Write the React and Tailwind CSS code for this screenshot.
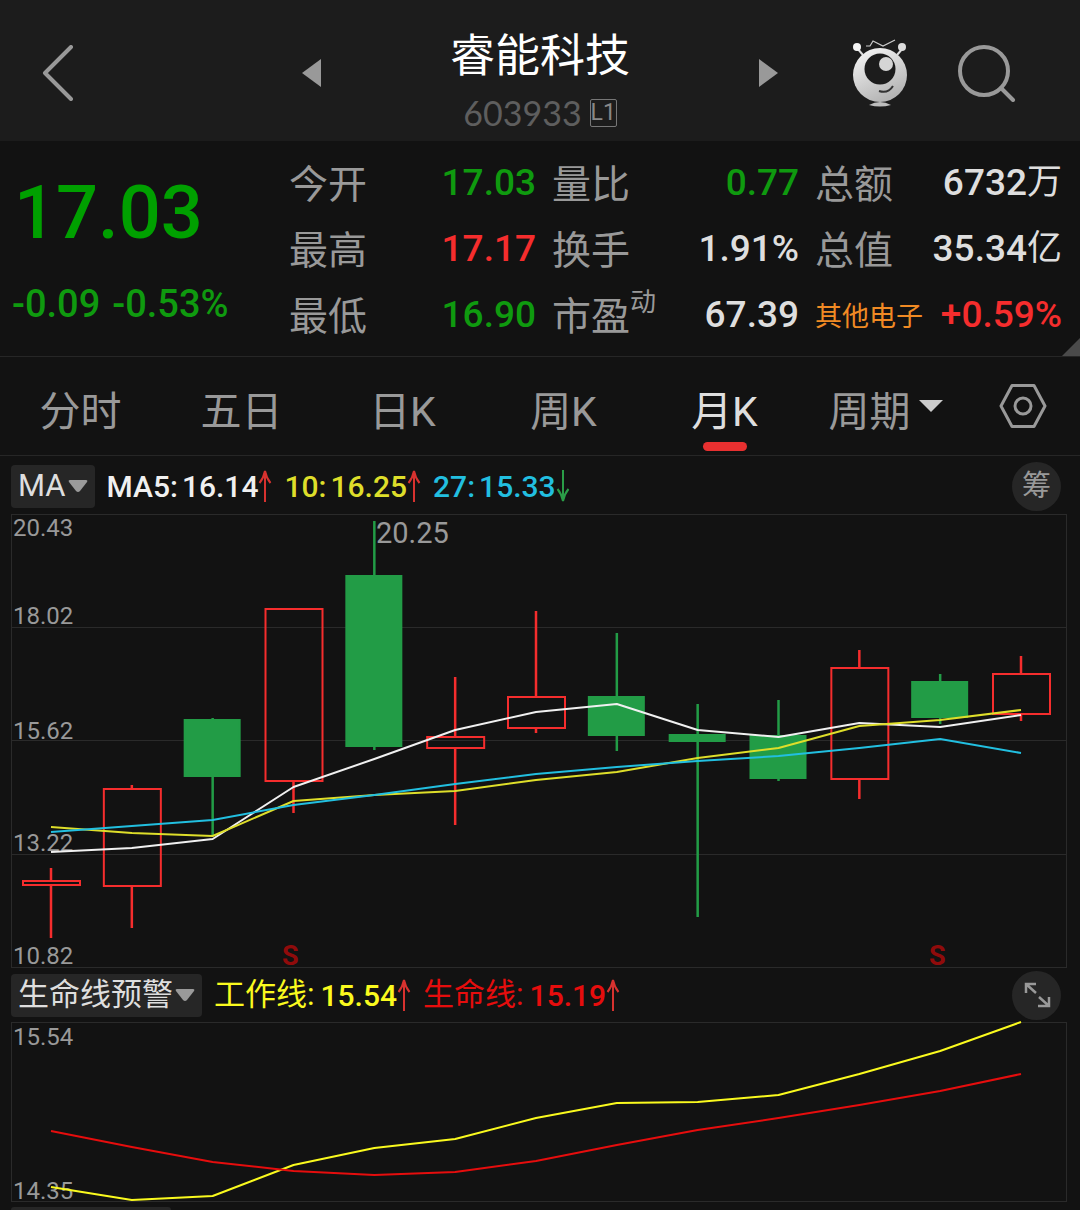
import React, { useState } from 'react';

// 行情数据
const stock = {
  name: '睿能科技',
  code: '603933',
  price: '17.03',
  change: '-0.09',
  percent: '-0.53%',
};

const quotes = [
  [
    { label: '今开', value: '17.03', color: 'text-[#0f9a0f]' },
    { label: '最高', value: '17.17', color: 'text-[#f52d2d]' },
    { label: '最低', value: '16.90', color: 'text-[#0f9a0f]' },
  ],
  [
    { label: '量比', value: '0.77', color: 'text-[#0f9a0f]' },
    { label: '换手', value: '1.91%', color: 'text-[#dedede]' },
    { label: '市盈', sup: '动', value: '67.39', color: 'text-[#dedede]' },
  ],
  [
    { label: '总额', value: '6732', unit: '万', color: 'text-[#dedede]' },
    { label: '总值', value: '35.34', unit: '亿', color: 'text-[#dedede]' },
    { label: '其他电子', industry: true, value: '+0.59%', color: 'text-[#f52d2d]' },
  ],
];

const tabs = ['分时', '五日', '日K', '周K', '月K'];

// K线: 最高, 实体上沿, 实体下沿, 最低, 是否上涨
const candles = [
  [354, 367, 371, 424, true],
  [271, 275, 372, 414, true],
  [204, 206, 262, 322, false],
  [95, 95, 267, 299, true],
  [7, 62, 232, 236, false],
  [163, 223, 234, 311, true],
  [97, 183, 214, 219, true],
  [119, 183, 221, 237, false],
  [190, 221, 227, 403, false],
  [186, 222, 264, 267, false],
  [136, 154, 265, 285, true],
  [160, 168, 203, 210, false],
  [142, 160, 200, 207, true],
];

const ma5 = [338, 334, 325, 273, 245, 216, 198, 190, 216, 223, 209, 213, 201];
const ma10 = [313, 319, 322, 287, 281, 277, 266, 258, 244, 234, 212, 206, 196];
const ma27 = [318, 312, 306, 291, 281, 270, 260, 253, 247, 242, 234, 225, 239];
const workLine = [165, 178, 174, 143, 126, 117, 96, 81, 80, 73, 52, 29, 0];
const lifeLine = [109, 125, 140, 149, 153, 150, 139, 123, 108, 96, 83, 69, 52];

const priceTicks = [
  { text: '20.43', y: 22 },
  { text: '18.02', y: 110 },
  { text: '15.62', y: 225 },
  { text: '13.22', y: 337 },
  { text: '10.82', y: 450 },
];

const xAt = (i) => 40 + (i * 970) / 12;
const toPoints = (list) => list.map((y, i) => `${xAt(i)},${y}`).join(' ');

const Line = ({ data, color }) => (
  <polyline points={toPoints(data)} fill="none" stroke={color} strokeWidth="2" strokeLinejoin="round" />
);

// 涨跌细箭头
const Trend = ({ down }) => (
  <svg viewBox="0 0 14 34" className={down ? 'h-[34px] w-3.5 rotate-180' : 'h-[34px] w-3.5'}>
    <path d="M7 33V3M1.500 14C4 11 6 7 7 2C8 7 10 11 12.500 14" fill="none" stroke={down ? '#2a9d47' : '#d8322f'} strokeWidth="2" />
  </svg>
);

const Caret = () => (
  <svg viewBox="0 0 20 14" className="h-3.5 w-5">
    <path d="M2 1H18Q20 1 19 3L12 12Q10 14 8 12L1 3Q0 1 2 1Z" fill="#9a9a9a" />
  </svg>
);

const Robot = () => (
  <svg viewBox="0 0 56 68" className="h-[68px] w-14">
    <defs>
      <linearGradient id="robotFace" x1="0" y1="0" x2="0.5" y2="1">
        <stop offset="0" stopColor="#fafafa" />
        <stop offset="1" stopColor="#b5b5b5" />
      </linearGradient>
    </defs>
    <path d="M5 9L11 16M51 9L45 16" stroke="#ddd" strokeWidth="2" />
    <circle cx="5" cy="8" r="4" fill="#f5f5f5" />
    <circle cx="50" cy="8" r="4" fill="#dcdcdc" />
    <path d="M14 7H18L21 2L31 7L43 1" fill="none" stroke="#ccc" strokeWidth="1.200" />
    <circle cx="28" cy="36" r="27" fill="url(#robotFace)" />
    <circle cx="28" cy="30" r="15.500" fill="#1c1c1c" />
    <circle cx="34" cy="25" r="7" fill="#d5d5d5" />
    <path d="M27 52Q36 55 41 47" fill="none" stroke="#333" strokeWidth="2" />
    <path d="M17 66Q28 60 39 66Q28 69 17 66Z" fill="#bdbdbd" />
  </svg>
);

const Header = () => (
  <header className="grid h-[141px] grid-cols-[1fr_476px_1fr] items-center bg-[#1c1c1c]">
    <button aria-label="返回" className="justify-self-start pt-1 pl-[42px]">
      <svg viewBox="0 0 32 56" className="h-14 w-8">
        <path d="M29 2L3 28L29 54" fill="none" stroke="#999" strokeWidth="4" strokeLinecap="round" strokeLinejoin="round" />
      </svg>
    </button>
    <div className="flex items-center justify-between pt-1">
      <button aria-label="上一只">
        <svg viewBox="0 0 20 30" className="h-[30px] w-5"><path d="M0 15L19 1V29Z" fill="#999" /></svg>
      </button>
      <div className="flex flex-col items-center pt-5">
        <h1 className="text-[45px] leading-[60px] text-white">{stock.name}</h1>
        <div className="flex items-center gap-2">
          <span className="font-[Lato,sans-serif] text-[34px] leading-[52px] text-[#5e5e5e]">{stock.code}</span>
          <span className="flex h-7 w-[27px] items-center justify-center rounded-xs border border-[#777] text-[23px] leading-none text-[#888]">L1</span>
        </div>
      </div>
      <button aria-label="下一只">
        <svg viewBox="0 0 20 30" className="h-[30px] w-5"><path d="M20 15L1 1V29Z" fill="#999" /></svg>
      </button>
    </div>
    <div className="flex items-center justify-end gap-[50px] pt-1 pr-16">
      <button aria-label="智能助手"><Robot /></button>
      <button aria-label="搜索">
        <svg viewBox="0 0 58 58" className="h-[58px] w-[58px]">
          <circle cx="26" cy="27" r="24" fill="none" stroke="#999" strokeWidth="4" />
          <path d="M43 44L55 56" stroke="#999" strokeWidth="4" strokeLinecap="round" />
        </svg>
      </button>
    </div>
  </header>
);

const Quote = () => (
  <section className="relative flex border-b border-[#262626] pt-[9px] pb-2">
    <div className="w-[289px] shrink-0 text-[#00a000]">
      <div className="pl-3.5 text-[74px] leading-[126px] font-medium">{stock.price}</div>
      <div className="flex gap-3 pl-3 text-[38px] leading-[56px] font-medium text-[#0f9a0f]">
        <span>{stock.change}</span>
        <span>{stock.percent}</span>
      </div>
    </div>
    <div className="grid flex-1 grid-cols-3 gap-x-4 pr-[18px]">
      {quotes.map((col, i) => (
        <dl key={i}>
          {col.map((item) => (
            <div key={item.label} className="flex h-[66px] items-center justify-between whitespace-nowrap">
              <dt className={item.industry ? 'pt-1 text-[27px] text-[#f08a24]' : 'flex pt-1 text-[39px] text-[#999]'}>
                {item.label}
                {item.sup && <sup className="top-0 text-[26px] leading-[28px]">{item.sup}</sup>}
              </dt>
              <dd className={`flex items-center text-[37px] font-medium ${item.color}`}>
                {item.value}
                {item.unit && <span className="text-[35px] font-normal">{item.unit}</span>}
              </dd>
            </div>
          ))}
        </dl>
      ))}
    </div>
    <svg viewBox="0 0 18 18" className="absolute right-0 bottom-0 h-[18px] w-[18px]">
      <path d="M18 0V18H0Z" fill="#4a4a4a" />
    </svg>
  </section>
);

const Tabs = ({ active, onChange }) => (
  <nav className="grid h-[99px] grid-cols-[repeat(6,161fr)_114fr] border-b border-[#262626]">
    {tabs.map((tab) => (
      <button
        key={tab}
        onClick={() => onChange(tab)}
        className={`flex flex-col items-center pt-[25px] text-[41px] leading-[60px] ${active === tab ? 'text-[#dedede]' : 'text-[#999]'}`}
      >
        {tab}
        {active === tab && <span className="h-[9px] w-11 rounded-full bg-[#e83030]" />}
      </button>
    ))}
    <button className="flex items-start justify-center gap-2 pt-[25px] text-[41px] leading-[60px] text-[#999]">
      周期
      <svg viewBox="0 0 24 12" className="mt-[18px] h-3 w-6"><path d="M0 0H24L12 12Z" fill="#ccc" /></svg>
    </button>
    <button aria-label="设置" className="flex items-center justify-center">
      <svg viewBox="0 0 48 44" className="h-11 w-12">
        <path d="M13 1.500H35L46 22L35 42.500H13L2 22Z" fill="none" stroke="#999" strokeWidth="3" strokeLinejoin="round" />
        <circle cx="24" cy="22" r="8" fill="none" stroke="#999" strokeWidth="3" />
      </svg>
    </button>
  </nav>
);

const IndicatorButton = ({ children }) => (
  <button className="flex h-[43px] items-center gap-0.5 rounded-sm bg-[#262626] px-[7px] text-[31px] text-[#dedede]">
    {children}
    <Caret />
  </button>
);

const Indicator = ({ name, value, color, down, thin }) => (
  <span className={`flex items-center text-[30px] font-medium ${color}`}>
    <span className={thin ? 'mr-1.5 text-[31px] font-normal' : 'mr-1'}>{name}:</span>
    {value}
    <Trend down={down} />
  </span>
);

const KChart = () => (
  <svg viewBox="0 0 1056 454" className="block w-full overflow-visible font-[Roboto,sans-serif]">
    <g fill="none" stroke="#2a2a2a" strokeWidth="1">
      <rect x="0.500" y="0.500" width="1055" height="453" />
      <path d="M0 113.500H1056M0 226.500H1056M0 340.500H1056" />
    </g>
    {priceTicks.map((t) => (
      <text key={t.text} x="2" y={t.y} fontSize="24" fill="#999">{t.text}</text>
    ))}
    <text x="365" y="29" fontSize="29" fill="#999">20.25</text>
    {candles.map(([high, top, bottom, low, up], i) => {
      const x = xAt(i);
      const color = up ? '#f52d2d' : '#229c46';
      return (
        <g key={i} stroke={color} strokeWidth="2">
          <path d={`M${x} ${high}V${top}M${x} ${bottom}V${low}`} strokeWidth="2.500" />
          <rect x={x - 28} y={top} width={up ? 57 : 55} height={bottom - top} fill={up ? 'none' : color} />
        </g>
      );
    })}
    <Line data={ma5} color="#f0f0f0" />
    <Line data={ma10} color="#dede2a" />
    <Line data={ma27} color="#22bfe0" />
    <text x="271" y="451" fontSize="27" fontWeight="700" fill="#900b0b">S</text>
    <text x="918" y="451" fontSize="27" fontWeight="700" fill="#900b0b">S</text>
  </svg>
);

const LifeChart = () => (
  <svg viewBox="0 0 1056 180" className="block w-full overflow-visible font-[Roboto,sans-serif]">
    <rect x="0.500" y="0.500" width="1055" height="179" fill="none" stroke="#2a2a2a" />
    <text x="2" y="23" fontSize="24" fill="#999">15.54</text>
    <text x="2" y="177" fontSize="24" fill="#999">14.35</text>
    <Line data={workLine} color="#fafa1e" />
    <Line data={lifeLine} color="#e60d0d" />
  </svg>
);

export default function App() {
  const [active, setActive] = useState('月K');

  return (
    <div className="min-h-screen bg-[#121212] font-[Roboto,'Noto_Sans_CJK_SC',sans-serif]">
      <Header />
      <Quote />
      <Tabs active={active} onChange={setActive} />

      {/* 主图 */}
      <main className="pr-[13px] pl-[11px]">
        <div className="flex h-[58px] items-center gap-3 pt-0.5">
          <IndicatorButton>MA</IndicatorButton>
          <Indicator name="MA5" value="16.14" color="text-[#f0f0f0]" />
          <Indicator name="10" value="16.25" color="text-[#dede2a]" />
          <Indicator name="27" value="15.33" color="text-[#22bfe0]" down />
          <button className="mr-1.5 ml-auto h-[49px] w-[49px] rounded-full bg-[#262626] text-[29px] leading-none text-[#999]">筹</button>
        </div>
        <KChart />

        {/* 副图 */}
        <div className="flex h-[54px] items-center gap-3">
          <IndicatorButton>生命线预警</IndicatorButton>
          <Indicator name="工作线" value="15.54" color="text-[#fafa1e]" thin />
          <Indicator name="生命线" value="15.19" color="text-[#e60d0d]" thin />
          <button aria-label="全屏" className="mr-1.5 ml-auto flex h-[49px] w-[49px] items-center justify-center rounded-full bg-[#262626]">
            <svg viewBox="0 0 28 26" className="h-[26px] w-7">
              <path d="M3 11V2H13M3 2L13 11M26 15V24H15M26 24L16 15" fill="none" stroke="#999" strokeWidth="2.500" />
            </svg>
          </button>
        </div>
        <LifeChart />
        <div className="mt-[5px] h-[3px] w-40 rounded-t-sm bg-[#262626]" />
      </main>
    </div>
  );
}
